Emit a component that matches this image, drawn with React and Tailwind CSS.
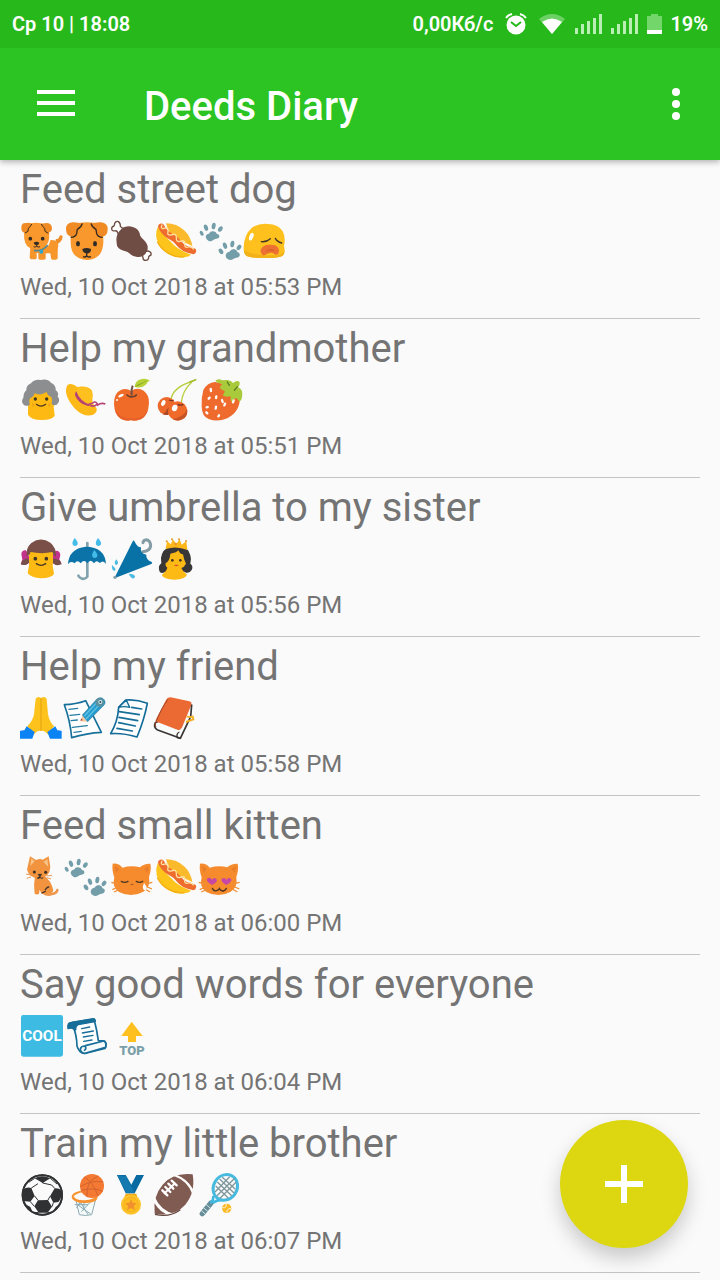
import { useState } from "react";

// every sticker is drawn in a 135x135 cell, x is the left edge of that cell
const Sticker = ({ x, label, children }) => (
  <svg viewBox={`${x} 12 135 135`} role="img" aria-label={label} className="w-[45px] h-[45px] shrink-0 overflow-visible">
    {children}
  </svg>
);

const Dog = () => (
  <Sticker x={30} label="dog">
    <path d="M137 73q10 0 11-9q5-6 10 0q-1 19-20 25z" fill="#ef8d28" />
    <path d="M61 93h75q9 5 7 19v18q-1 4-6 4h-10q-4-1-4-5l-2-14h-14v15q0 4-5 4H89q-4-1-4-5v-15h-5v14q0 5-5 5H63q-4-1-4-6z" fill="#f7962b" />
    <path d="M122 75q24-2 23 18q-2 22-18 20l-12-20z" fill="#f7962b" />
    <path d="M48 29q29-11 61 0q14 24 6 52q-9 22-35 22T46 84q-9-25 2-55z" fill="#f9982c" />
    <path d="M50 24q-17-2-16 15q0 13 10 14q18-8 20-27q-7-4-14-2zm58 0q16-1 18 15q0 13-12 14q-15-8-18-27z" fill="#ef8a25" />
    <path d="M65 27q-3 8-10 13l-1 9-9 5m49-27q3 8 10 13l1 9 10 6" fill="none" stroke="#3d2b20" strokeWidth="3" />
    <circle cx="61" cy="71" r="5.500" fill="#302c25" />
    <circle cx="98" cy="71" r="5.500" fill="#302c25" />
    <path d="M71 83q8-5 17 0q-1 7-8 8q-8-1-9-8z" fill="#302c25" />
    <path d="M80 90v4q-5 4-9 1m9-1q5 4 10 1" fill="none" stroke="#302c25" strokeWidth="3" />
    <path d="M72 106q25 5 41-16" fill="none" stroke="#4f8999" strokeWidth="5" />
    <circle cx="94" cy="110" r="6" fill="#2aa7ce" />
  </Sticker>
);

const DogFace = () => (
  <Sticker x={165} label="dog face">
    <path d="M190 26q40-9 82 0q9 20 8 58q-3 49-48 51q-49-2-50-51q-1-35 8-58z" fill="#f9982c" />
    <path d="M188 22q-22 2-20 23q2 18 17 20q18-9 31-38q-14-6-28-5zm85 0q21 2 20 22q-1 19-17 21q-20-11-32-38q14-6 29-5z" fill="#ef8a25" />
    <path d="M217 25q-3 12-15 18l-2 13q-4 10-18 11m61-42q3 12 15 18l2 13q4 10 18 11" fill="none" stroke="#3b2b1f" strokeWidth="4" />
    <ellipse cx="204" cy="86" rx="6" ry="8" fill="#302c25" />
    <ellipse cx="255" cy="86" rx="6" ry="8" fill="#302c25" />
    <path d="M217 102q13-6 26 0q1 12-12 14q-13-2-14-14z" fill="#302c25" />
    <path d="M230 115v8q-4 5-11 2m11-2q6 5 13 2" fill="none" stroke="#302c25" strokeWidth="4" />
  </Sticker>
);

const Meat = () => (
  <Sticker x={300} label="meat on bone">
    <path d="M326 62q-2-12-8-15q-12 3-13-5q0-7 7-9q2-3 2-8q4-8 11-5q7 5 6 14q5 7 14 7l-3 14z" fill="#fff" stroke="#6d4c41" strokeWidth="4" strokeLinejoin="round" />
    <path d="M396 118q2-6 10-8q8-4 13 0q6 4 4 10q-6 2-7 6q0 10-9 10q-8 0-8-8z" fill="#fff" stroke="#6d4c41" strokeWidth="4" strokeLinejoin="round" />
    <path d="M332 44q14-13 34-9q18 4 23 20q1 12 12 19q16 15 11 32q-8 22-30 20q-16-2-24-11q-5-6-17-8q-22-6-21-24q-4-24 12-39z" fill="#704d44" />
  </Sticker>
);

const HotDog = () => (
  <Sticker x={435} label="hot dog">
    <path d="M468 25q32 0 56 22q18 17 23 46L480 62z" fill="#fbb92c" />
    <path d="M443 36q-7 18-3 36q7 27 31 43q25 16 52 12q14-2 20-8q-40-14-60-38q-24-22-40-45z" fill="#fdc51b" />
    <path d="M442 80q12 24 36 36q22 12 45 9" fill="none" stroke="#f4af13" strokeWidth="4" />
    <path d="M454 35q8 18 26 28q16 8 27 22q14 18 42 23" fill="none" stroke="#ee6d2e" strokeWidth="19" strokeLinecap="round" />
    <path d="M456 30q-5 10 3 11q18-8 15 10q-4 11 10 9q16-7 15 8q-1 14 12 11q16-6 13 8q-1 14 12 9q8-3 14 6" fill="none" stroke="#ffe1a2" strokeWidth="4" strokeLinecap="round" strokeLinejoin="round" />
  </Sticker>
);

const Paws = () => (
  <Sticker x={566} label="paw prints">
    <g fill="#739ea9">
      <path d="M583 66q1-9 10-10q5-9 13-7q8 1 11 8q8 1 7 9q-2 5-9 5q-6 1-10 5q-7 5-14 1q-7-4-8-11z" />
      <ellipse cx="571" cy="55" rx="5" ry="8" transform="rotate(-32 571 55)" />
      <ellipse cx="584" cy="38" rx="6" ry="10" transform="rotate(-18 584 38)" />
      <ellipse cx="607" cy="33" rx="6" ry="10" transform="rotate(8 607 33)" />
      <ellipse cx="627" cy="42" rx="6" ry="9" transform="rotate(35 627 42)" />
      <path d="M643 122q1-10 11-12q5-8 14-8q9 2 11 10q8 2 6 10q-3 6-9 6q-7 1-11 5q-8 4-15 0q-7-4-7-11z" />
      <ellipse cx="629" cy="109" rx="6" ry="9" transform="rotate(-32 629 109)" />
      <ellipse cx="641" cy="92" rx="6" ry="10" transform="rotate(-18 641 92)" />
      <ellipse cx="663" cy="87" rx="6" ry="10" transform="rotate(8 663 87)" />
      <ellipse cx="683" cy="97" rx="6" ry="9" transform="rotate(35 683 97)" />
    </g>
  </Sticker>
);

const WearyFace = () => (
  <Sticker x={705} label="weary face">
    <path d="M701 98q1-39 24-59q20-15 49-12q32 1 44 22q10 18 4 44q5 19-3 28q-8 8-48 8q-50 1-63-7q-8-9-7-24z" fill="#fdc01d" />
    <path d="M701 106q2 12 10 17q11 6 60 6q44 0 50-10q3-6 2-10q-6 10-20 11q-63 6-102-14z" fill="#f2b116" />
    <ellipse cx="724" cy="65" rx="6" ry="12" fill="#fff" transform="rotate(20 724 65)" />
    <path d="M754 80q15 2 27-9m15-1q5 10 19 14" fill="none" stroke="#43362b" strokeWidth="4" strokeLinecap="round" />
    <path d="M751 106q7-18 28-17q25-1 28 16q1 15-11 14q-5-6-13-6q-9 0-20 8q-9 2-12-15z" fill="#ed7131" />
    <path d="M765 110q8-9 20-8q8 1 10 7q-6-2-12-2q-9 0-18 3z" fill="#d9622b" />
  </Sticker>
);

const Grandma = () => (
  <Sticker x={30} label="old woman">
    <path d="M54 122V72q3-30 41-30q37 2 38 34v16q-4 6-1 13l2 20q-8 13-39 13q-32 0-41-16z" fill="#feb913" />
    <path d="M43 94q-12-10-3-23q1-16 9-22q-1-15 14-21q9-13 29-10q20-5 31 8q15 7 14 22q11 8 6 19q10 15-3 25q-12 4-15-3q4-10-1-20q-11-3-14-15q-19 12-36 4q-3 11-14 15q-4 10-1 19q-6 6-16 2z" fill="#8d8e90" />
    <circle cx="76" cy="75" r="5" fill="#3e3421" />
    <circle cx="110" cy="75" r="5" fill="#3e3421" />
    <path d="M79 91q14 11 28 0" fill="none" stroke="#4b3820" strokeWidth="4" strokeLinecap="round" />
    <path d="M66 89l6 2m42 0l6-2m-53 7l5-1m43 0l5 1" stroke="#d98c17" strokeWidth="2" />
  </Sticker>
);

const Hat = () => (
  <Sticker x={165} label="hat">
    <path d="M173 32q13-7 29 7q31-5 44 11q4 11 1 26q-1 14 12 25q5 13-11 22q-27 7-53-19q-39-45-22-72z" fill="#fdb917" />
    <path d="M199 41q28-7 43 6q6 10 4 27q-2 14-21 9q-30-18-26-42z" fill="#fec01e" />
    <path d="M199 52q10 31 43 41q-6 6-14 1q-23-6-33-30q-1-8 4-12z" fill="#b54377" />
    <path d="M236 91q12-2 17-7q7-1 10 9q11-8 23-3m-45 5q14 4 20-4" fill="none" stroke="#b54377" strokeWidth="5" />
  </Sticker>
);

const Apple = () => (
  <Sticker x={300} label="apple">
    <path d="M363 51q19-13 38-1q17 13 16 37q-2 36-23 48q-18 8-30 4q-15 4-31-4q-20-15-21-46q0-33 22-42q17-5 29 4z" fill="#f06a28" />
    <path d="M314 106q5 23 25 31q12 4 24 1q14 4 29-2q18-10 23-32q-9 21-29 27q-32 6-53-5q-13-10-19-20z" fill="#e6612a" />
    <ellipse cx="333" cy="65" rx="9" ry="4" transform="rotate(-28 333 65)" fill="#fff" />
    <circle cx="321" cy="78" r="3" fill="#fff" />
    <path d="M351 63q7 7 15 5q8 1 13-5" fill="none" stroke="#69402c" strokeWidth="5" strokeLinecap="round" />
    <path d="M365 64q-2-17 3-29" fill="none" stroke="#715044" strokeWidth="6" />
    <path d="M374 38q3-21 22-23q14-2 24 5q-9 2-11 11q-15 15-35 7z" fill="#b8d33a" />
    <path d="M376 37q12-5 35-17" stroke="#92b51c" strokeWidth="2" />
  </Sticker>
);

const Cherries = () => (
  <Sticker x={435} label="cherries">
    <path d="M483 77q5-38 67-56m-5 4q-28 24-32 66" fill="none" stroke="#b6cf3e" strokeWidth="4" />
    <path d="M540 24l17-7" stroke="#a2bd2e" strokeWidth="5" strokeLinecap="round" />
    <circle cx="470" cy="96" r="27" fill="#ed692b" />
    <path d="M458 121q10 3 17 1l2-22-6 6q-3 10-13 15z" fill="#a94826" />
    <circle cx="503" cy="111" r="29" fill="#f06a2a" />
    <path d="M487 135q20 10 37-3q11-13 7-28q-6 24-44 31z" fill="#c75426" />
    <path d="M477 78q9 4 14 0m12 13q8 5 17 0" fill="none" stroke="#793824" strokeWidth="4" />
    <ellipse cx="460" cy="87" rx="6" ry="9" transform="rotate(25 460 87)" fill="#fff" />
    <ellipse cx="494" cy="102" rx="8" ry="10" transform="rotate(20 494 102)" fill="#fff" />
  </Sticker>
);

const Strawberry = () => (
  <Sticker x={570} label="strawberry">
    <path d="M580 48q12-22 35-24q45 5 74 43q4 44-37 66q-30 12-56 2q-20-8-21-37q-2-25 5-50z" fill="#ee6a2d" />
    <path d="M616 21q7-9 21-2l15-1q12 1 17 9q12-11 20-3q2 8-5 16q16 5 12 30q-1 10-8 13q-5-7-9-11q-13 4-14 12q-5-5-3-17q-18 4-24-3q6-5 6-14q-11-1-15-10l8-10q-14-1-21-9z" fill="#a9ca3a" />
    <path d="M652 24l6 10m24 4l-9 11" stroke="#587b24" strokeWidth="4" strokeLinecap="round" />
    <path d="M602 45l1 6m-7 23l3-3m19 1l1-5m17 11l2 6m-48 16l3-1m24 5l1-6m25-4l2-5m24-4l2-6m-46 48l2-3m-38-9l3 3" stroke="#fff" strokeWidth="7" strokeLinecap="round" />
  </Sticker>
);

const Girl = () => (
  <Sticker x={30} label="girl">
    <path d="M48 52q-12-2-14 11l3 17q-4 7-4 14q20 7 29-12zm89 1q12-1 14 12l-3 15q6 7 6 12q-23 10-35-13z" fill="#c2318c" />
    <path d="M38 82l-6 12q20 7 27-10l-7-8zm111 0l6 12q-22 8-29-10l7-8z" fill="#754f48" />
    <path d="M57 47h72v44q-3 7 0 13l3 19q-7 12-39 13q-29-1-40-15l4-26z" fill="#feba14" />
    <path d="M50 70q-3-25 14-40q28-20 57-1q18 14 17 42q-9-5-11-14q-31 7-65 0q-2 9-12 13z" fill="#794f47" />
    <circle cx="76" cy="77" r="5.500" fill="#413425" />
    <circle cx="109" cy="77" r="5.500" fill="#413425" />
    <path d="M79 92q14 10 28 0" fill="none" stroke="#413425" strokeWidth="4" strokeLinecap="round" />
  </Sticker>
);

const Umbrella = () => (
  <Sticker x={165} label="umbrella with rain">
    <path d="M232 30v101q-5 8-16 6q-9-3-11-9" fill="none" stroke="#80a3ad" strokeWidth="8" strokeLinecap="round" />
    <path d="M174 94q2-47 53-53q58 1 61 52q-8-14-19-3q-9-11-17 1q-10-15-20 0q-10-14-20 0q-10-12-18 0q-12-10-20 3z" fill="#0b73a8" />
    <g fill="#43bce8">
      <path d="M194 15q14 15 7 22q-7 4-12-1q-5-7 5-21z" />
      <path d="M264 15q14 15 7 22q-7 4-12-1q-5-7 5-21z" />
      <path d="M253 51q14 15 7 22q-7 4-12-1q-5-7 5-21z" />
    </g>
  </Sticker>
);

const ClosedUmbrella = () => (
  <Sticker x={300} label="closed umbrella">
    <path d="M398 56q22-2 24-17q-1-18-13-19q-9 1-10 9" fill="none" stroke="#839ba4" strokeWidth="9" strokeLinecap="round" />
    <path d="M313 136l56-113q3-2 5 3q9 18 19 17q-4 20 16 22q-2 14 16 22q4 3-1 6z" fill="#0871a5" />
    <circle cx="315" cy="133" r="5" fill="#829ea7" />
    <g fill="#4abce1">
      <path d="M319 79q-8 10-2 17q8-1 7-9z" />
      <path d="M306 96q-2 14 6 18q8-4 2-10z" />
      <path d="M356 122q8 17 16 14q8-6-4-12z" />
    </g>
  </Sticker>
);

const Princess = () => (
  <Sticker x={435} label="princess">
    <path d="M464 118q-16 6-17-10q-2-10 7-17q-4-15 2-28q9-24 43-25q37 1 42 29q4 12 0 25q10 7 4 19q-9 14-22 5z" fill="#393638" />
    <path d="M467 91q13-9 14-29q17-2 24-10q6 13 14 12q2 15 9 28q-6 11-14 13q4 11 17 20q-5 13-38 15q-32-1-38-15q14-9 17-21q-7-4-5-13z" fill="#feba14" />
    <path d="M467 48l4-23 12 9 5-15 11 13 10-13 6 16 14-10 3 26q-33-14-65-3z" fill="#fdb719" />
    <g fill="#e89530">
      <circle cx="470" cy="25" r="3" />
      <circle cx="486" cy="19" r="3" />
      <circle cx="507" cy="19" r="3" />
      <circle cx="528" cy="24" r="3" />
      <circle cx="497" cy="33" r="4" />
    </g>
    <circle cx="487" cy="82" r="4" fill="#453222" />
    <circle cx="511" cy="82" r="4" fill="#453222" />
    <path d="M491 96q8-2 16 0q-8 7-16 0z" fill="#d54a29" />
  </Sticker>
);

const Hands = () => (
  <Sticker x={30} label="folded hands">
    <path d="M77 20q6-9 16-2q11-7 17 2l4 47q4 22 18 36l-17 25q-13-15-23-11q-9-4-21 11l-19-25q17-17 20-36z" fill="#fdc31c" />
    <path d="M93 18v98" stroke="#eaa915" strokeWidth="4" />
    <path d="M50 103l24 17-7 20H30v-23q4-2 13-2zm86 0l-24 17 8 20h35v-23q-4-2-13-2z" fill="#0b83f4" />
  </Sticker>
);

const Memo = () => (
  <Sticker x={165} label="memo">
    <path d="M163 38q34-1 64-12l47 95q-43 2-89 16q-4-50-22-99z" fill="#fff" stroke="#17709a" strokeWidth="5" strokeLinejoin="round" />
    <path d="M177 52l26-3m-23 21l29-3m-26 19l19-2m-15 22l45-5m-40 20l22-3" stroke="#277da2" strokeWidth="4" strokeLinecap="round" />
    <path d="M217 71l14 18-20-1z" fill="#f3c69c" />
    <path d="M217 69l45-49q13-7 21 4q5 9-1 15l-49 50z" fill="#269bd0" stroke="#337d99" strokeWidth="2" />
    <path d="M223 72l43-46m-38 55l44-47" stroke="#63c4e1" strokeWidth="4" />
    <circle cx="269" cy="31" r="13" fill="#5b91a0" />
    <circle cx="271" cy="30" r="6" fill="#d6edf1" />
    <circle cx="271" cy="30" r="3" fill="#344b55" />
    <path d="M211 86l7-1-4-6z" fill="#a34c3b" />
  </Sticker>
);

const PageIcon = () => (
  <Sticker x={300} label="page">
    <path d="M347 24q32-3 65 10q-10 51-31 101q-43-13-79-10q22-37 24-79z" fill="#fff" stroke="#116b98" strokeWidth="5" strokeLinejoin="round" />
    <path d="M326 46l23-22 10 22q-17-4-33 0z" fill="#e5f2f6" stroke="#116b98" strokeWidth="4" strokeLinejoin="round" />
    <path d="M365 46l30 5m-67 8l60 9m-61 8l56 10m-57 6l50 10m-55 7l46 8" stroke="#176f99" strokeWidth="5" strokeLinecap="round" />
  </Sticker>
);

const Notebook = () => (
  <Sticker x={435} label="notebook">
    <path d="M436 92q-6 14 5 21l70 26 31-65 3-35z" fill="#f9fafa" stroke="#393533" strokeWidth="5" strokeLinejoin="round" />
    <path d="M444 91l60 23q8 0 13-10l27-66q2-8-6-10l-56-12q-10-1-14 8l-31 60q-2 5 7 7z" fill="#eb6933" />
    <path d="M474 22q-22 29-37 71q-4 6 1 12" fill="none" stroke="#99462b" strokeWidth="3" />
    <path d="M508 120q-10 5-6 17l8 2" fill="none" stroke="#3b3430" strokeWidth="4" />
    <path d="M530 73q12 4 18 1l2 8-22 8" fill="none" stroke="#f4b127" strokeWidth="6" />
  </Sticker>
);

const Cat = () => (
  <Sticker x={30} label="cat">
    <path d="M104 128q12 5 21 1q15-2 17-12" fill="none" stroke="#ef9950" strokeWidth="8" strokeLinecap="round" />
    <path d="M75 75h28q20 13 27 42q-2 12-20 12H98q-6-3-9-13l-2 13q-7 3-13-1q-4-27 1-53z" fill="#f2943f" />
    <path d="M60 16l18 11q12-5 20-1l18-10 5 32q-2 31-31 34q-32 0-39-26z" fill="#f2943f" />
    <path d="M64 22l10 9-13 14zm48 2l-11 9 14 15z" fill="#f7c389" />
    <path d="M106 116q6-9 10-8m-20 18l10-5" stroke="#47352b" strokeWidth="4" strokeLinecap="round" />
    <circle cx="73" cy="63" r="4.500" fill="#342d27" />
    <circle cx="107" cy="64" r="4.500" fill="#342d27" />
    <path d="M84 70h11l-5 7zm6 5v5q-4 4-9 1m9-1q5 4 10 0" fill="#342d27" stroke="#342d27" strokeWidth="2" />
    <path d="M48 69l14 3m-12 10l13-4m47-3l16-2m-16 7l13 4" stroke="#e79b58" strokeWidth="3" />
  </Sticker>
);

const CatHead = () => (
  <>
    <path d="M308 38q18-2 29 12q27-8 53-1q12-12 31-11q4 16-4 40q5 31-17 44q-36 20-73 1q-22-14-14-44q-8-22-5-41z" fill="#f68b2d" />
    <path d="M314 45l14 9-10 11zm102 0l-14 9 11 11z" fill="#e87d2a" />
    <path d="M304 94l20 5m-17 17l18-8m-13 15l17-8m98-21l-22 5m21 15l-18-8m12 17l-15-9" stroke="#f09039" strokeWidth="4" />
  </>
);

const CryingCat = () => (
  <Sticker x={300} label="crying cat">
    <CatHead />
    <path d="M334 91q9 6 20 0m25 0q10 6 19 0" fill="none" stroke="#493723" strokeWidth="4" strokeLinecap="round" />
    <path d="M360 100q6-3 12 0q-6 6-12 0z" fill="#a5632a" />
    <path d="M402 96q15 18 4 22q-13 0-4-22z" fill="#fff" />
  </Sticker>
);

const LoveCat = () => (
  <Sticker x={308} label="heart eyes cat">
    <CatHead />
    <path d="M344 102q-24-15-12-21q8-3 12 6q4-9 12-4q10 7-12 19zm43 0q-23-13-11-20q7-4 11 5q4-9 12-5q11 7-12 20z" fill="#c747a5" />
    <path d="M345 112q4 10 13 7q7-3 8-6q5 8 12 7q7-2 9-8" fill="none" stroke="#453323" strokeWidth="4" strokeLinecap="round" />
  </Sticker>
);

const Cool = () => (
  <Sticker x={30} label="cool">
    <rect x="33" y="15" width="126" height="125" rx="7" fill="#3ebbe2" />
    <text x="96" y="94" textAnchor="middle" fontSize="46" fontWeight="700" fill="#fff">COOL</text>
  </Sticker>
);

const Scroll = () => (
  <Sticker x={165} label="scroll">
    <path d="M186 38l66-11q9 34 13 65l19 1q8 8 1 22l-63 15q-15-2-21-22q0-31-15-70z" fill="#fff" stroke="#176e99" strokeWidth="5" strokeLinejoin="round" />
    <path d="M174 56q-3-19 10-19l66-11q9 4 5 9l-50 9q-8 3-8 16l-14-6z" fill="#176e99" stroke="#176e99" strokeWidth="4" strokeLinejoin="round" />
    <path d="M226 107l55-14q9 3 6 19l-62 18q-13-1-14-13q2-9 13-9q8 7-2 14" fill="#f5fafa" stroke="#176e99" strokeWidth="5" strokeLinejoin="round" />
    <path d="M215 56l24-5m-22 18l33-6m-30 18l29-5m-28 18l25-4" stroke="#176e99" strokeWidth="4" strokeLinecap="round" />
  </Sticker>
);

const Top = () => (
  <Sticker x={300} label="top">
    <path d="M365 35l33 43h-20v18h-24V78h-20z" fill="#fec01f" />
    <text x="366" y="134" textAnchor="middle" fontSize="39" fontWeight="900" fill="#7b9fa9">TOP</text>
  </Sticker>
);

const Soccer = () => (
  <Sticker x={30} label="soccer ball">
    <circle cx="97" cy="78" r="60" fill="#fafafa" stroke="#303132" strokeWidth="4" />
    <path d="M74 28q22-12 47 0l-23 14zM40 62q9-9 24-5l10 24-13 17-21-2q-5-20 0-34zm80 20l14-24q17-1 21 10q0 21-10 31l-15 2zM84 94l30-1 12 20-13 18H86L73 112zM44 104q9 21 25 27l-8-17zm84 25q16-9 22-25l-13 10z" fill="#303132" />
    <path d="M98 42V28m-34 29l20-13m14-2l27 6 9 10M74 81l10 13m36-12l-6 11M61 98l12 14m53 1l4-12M70 130l16 1m27 0l16-2M74 28L56 40m65-12l20 17" fill="none" stroke="#303132" strokeWidth="3" />
    <circle cx="97" cy="78" r="59" fill="none" stroke="#303132" strokeWidth="6" />
  </Sticker>
);

const Basketball = () => (
  <Sticker x={165} label="basketball">
    <path d="M195 87l13 48q21 8 38 0l13-50z" fill="#f5fafa" />
    <path d="M197 91l11 46q18 5 37 0l13-50m-56 20l40 28m-30-34l22 36m14-45l-34 36m12-42l-27 30m10-36l-2 30m16-30l-2 44m-27-17h40" fill="none" stroke="#8cabb3" strokeWidth="3" />
    <ellipse cx="224" cy="82" rx="36" ry="15" fill="#fafafa" stroke="#f99330" strokeWidth="6" transform="rotate(-3 224 82)" />
    <circle cx="246" cy="51" r="36" fill="#f47932" />
    <path d="M223 24q27 16 41 57M211 53q33-21 69-14m-49 44q-4-48 34-62m-51 43q37-10 64 3" fill="none" stroke="#d2632f" strokeWidth="3" />
    <path d="M190 86q10 15 39 13q29-1 31-15" fill="none" stroke="#f99330" strokeWidth="6" />
  </Sticker>
);

const Medal = () => (
  <Sticker x={300} label="medal">
    <path d="M321 18h26l17 29 15-29h23l-28 55h-27z" fill="#0969a1" />
    <path d="M321 18l29 55h24l-24-50z" fill="#1479ae" />
    <path d="M347 74h32l3 11h-39z" fill="#efac18" />
    <circle cx="363" cy="107" r="30" fill="#fdc32a" />
    <circle cx="363" cy="107" r="22" fill="#ffbd20" stroke="#ebaa1c" strokeWidth="2" />
    <path d="M363 91l5 10 12 2-8 8 2 12-11-6-11 6 2-12-8-8 12-2z" fill="#ef912e" />
  </Sticker>
);

const Football = () => (
  <Sticker x={435} label="football">
    <path d="M434 134q-6-52 24-87q31-37 90-31q9 54-22 91q-33 37-92 27z" fill="#805b51" />
    <path d="M500 18q32 11 49 43l-2 14q-14-40-57-55zM434 83q18 43 61 52l-14 4q-31-7-48-38z" fill="#fff" />
    <path d="M462 74l34-32" stroke="#fff" strokeWidth="6" />
    <path d="M457 64l15 15m-6-25l15 15m-6-25l15 15m-5-24l15 14" stroke="#fff" strokeWidth="7" strokeLinecap="round" />
    <path d="M435 136q44 10 76-14" fill="none" stroke="#63443c" strokeWidth="4" />
  </Sticker>
);

const Tennis = () => (
  <Sticker x={570} label="tennis">
    <path d="M577 134l26-32" stroke="#668e99" strokeWidth="16" strokeLinecap="round" />
    <path d="M574 125l12 10m-6-19l13 11m-5-21l12 11" stroke="#d6e2e3" strokeWidth="3" />
    <path d="M600 101q10-2 10-20m-2 21q16-12 35-9" fill="none" stroke="#42b8df" strokeWidth="8" />
    <ellipse cx="646" cy="55" rx="35" ry="40" fill="#fafafa" stroke="#47bbdf" strokeWidth="9" transform="rotate(35 646 55)" />
    <path d="M617 51l38 36m-33-48l43 41m-36-50l43 42m-35-47l39 36M615 69l44-46m-38 57l53-52m-44 60l48-48" stroke="#7f979e" strokeWidth="4" />
    <circle cx="650" cy="118" r="14" fill="#fbb928" />
    <path d="M637 116q13 3 12-12m2 27q-2-13 12-12" fill="none" stroke="#fff4d3" strokeWidth="3" />
  </Sticker>
);

const DEEDS = [
  { title: "Feed street dog", date: "Wed, 10 Oct 2018 at 05:53 PM", stickers: [Dog, DogFace, Meat, HotDog, Paws, WearyFace] },
  { title: "Help my grandmother", date: "Wed, 10 Oct 2018 at 05:51 PM", stickers: [Grandma, Hat, Apple, Cherries, Strawberry] },
  { title: "Give umbrella to my sister", date: "Wed, 10 Oct 2018 at 05:56 PM", stickers: [Girl, Umbrella, ClosedUmbrella, Princess] },
  { title: "Help my friend", date: "Wed, 10 Oct 2018 at 05:58 PM", stickers: [Hands, Memo, PageIcon, Notebook] },
  { title: "Feed small kitten", date: "Wed, 10 Oct 2018 at 06:00 PM", stickers: [Cat, Paws, CryingCat, HotDog, LoveCat] },
  { title: "Say good words for everyone", date: "Wed, 10 Oct 2018 at 06:04 PM", stickers: [Cool, Scroll, Top] },
  { title: "Train my little brother", date: "Wed, 10 Oct 2018 at 06:07 PM", stickers: [Soccer, Basketball, Medal, Football, Tennis] },
];

const Signal = () => (
  <svg viewBox="0 0 28 20" className="w-7 h-5" fill="#b9efb4" aria-hidden="true">
    <rect x="0" y="14" width="3" height="6" />
    <rect x="6" y="10" width="3" height="10" />
    <rect x="12" y="7" width="3" height="13" />
    <rect x="18" y="4" width="3" height="16" />
    <rect x="24" y="0" width="3" height="20" />
  </svg>
);

const StatusBar = () => (
  <div className="h-12 px-3 flex items-center justify-between bg-[#27b91c] text-white text-[20px] font-semibold leading-6">
    <span>Ср 10 | 18:08</span>
    <div className="flex items-center">
      <span className="mr-3">0,00Кб/с</span>
      <svg viewBox="0 0 22 22" className="w-[22px] h-[22px] mr-3" aria-hidden="true">
        <circle cx="11" cy="12" r="9.500" fill="#fff" />
        <path d="M1 5q2-3 6-4m8 0q4 1 6 4" fill="none" stroke="#fff" strokeWidth="2" />
        <path d="M6 9l5 4 5-4" fill="none" stroke="#27b91c" strokeWidth="2" />
      </svg>
      <svg viewBox="0 0 26 20" className="w-[26px] h-5 mr-2.5" aria-hidden="true">
        <path d="M0 5q13-10 26 0L13 20z" fill="#6bd162" />
        <path d="M3 8q10-7 20 0L13 20z" fill="#fff" />
      </svg>
      <span className="mr-2"><Signal /></span>
      <span className="mr-2"><Signal /></span>
      <svg viewBox="0 0 15 20" className="w-[15px] h-5 mr-2" aria-hidden="true">
        <path d="M4 0h7v2h4v14H0V2h4z" fill="#72d66b" />
        <path d="M0 16h15v4H0z" fill="#fff" />
      </svg>
      <span>19%</span>
    </div>
  </div>
);

export default function App() {
  const [deeds] = useState(DEEDS);

  return (
    <div className="min-h-screen bg-[#fafafa] font-['Roboto','Noto_Sans',sans-serif]">
      <header className="relative shadow-[0_2px_6px_rgba(0,0,0,0.3)]">
        <StatusBar />
        <div className="h-28 pl-9 pr-6 flex items-center bg-[#2bc423] text-white">
          <button type="button" aria-label="Open menu" className="w-10 h-12">
            <svg viewBox="0 0 40 48" className="w-10 h-12" fill="currentColor">
              <path d="M1 10h38v4H1zM1 21h38v4H1zM1 32h38v4H1z" />
            </svg>
          </button>
          <h1 className="ml-[68px] pt-1.5 flex-1 text-[40px] leading-[48px] font-medium">Deeds Diary</h1>
          <button type="button" aria-label="More options" className="w-10 h-12">
            <svg viewBox="0 0 40 48" className="w-10 h-12" fill="currentColor">
              <circle cx="20" cy="12" r="4" />
              <circle cx="20" cy="24" r="4" />
              <circle cx="20" cy="36" r="4" />
            </svg>
          </button>
        </div>
      </header>

      <main className="px-5">
        <ul>
          {deeds.map((deed) => (
            <li key={deed.title} className="pt-1.5 pb-[17px] border-b border-[#c4c4c4] text-[#747474]">
              <h2 className="text-[40px] leading-[48px]">{deed.title}</h2>
              <div className="mt-[5px] flex">
                {deed.stickers.map((Item, i) => (
                  <Item key={i} />
                ))}
              </div>
              <p className="mt-[9px] text-[24px] leading-7">{deed.date}</p>
            </li>
          ))}
        </ul>
      </main>

      <button
        type="button"
        aria-label="Add deed"
        className="fixed right-8 bottom-8 size-32 rounded-full bg-[#dcd711] text-white flex items-center justify-center shadow-[0_10px_20px_rgba(0,0,0,0.2)]"
      >
        <svg viewBox="0 0 38 38" className="w-[38px] h-[38px]" fill="currentColor">
          <path d="M16 0h6v16h16v6H22v16h-6V22H0v-6h16z" />
        </svg>
      </button>
    </div>
  );
}
